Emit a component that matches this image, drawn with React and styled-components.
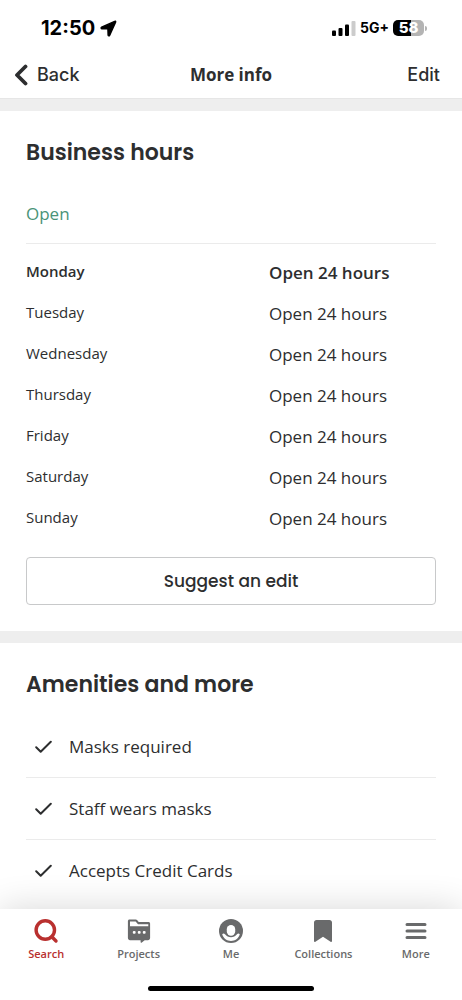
import React from "react";
import styled, { createGlobalStyle } from "styled-components";

const ink = "#2d2e2f";
const red = "#b9302f";
const gray = "#696a6b";
const body = '"Open Sans", "Noto Sans", sans-serif';
const display = 'Poppins, Inter, "Liberation Sans", sans-serif';
const system = 'Inter, "Liberation Sans", sans-serif';

const GlobalStyle = createGlobalStyle`
  *, *::before, *::after { box-sizing: border-box; }
  body { margin: 0; background: #fff; color: ${ink}; font-family: ${body}; }
  h1, h2, ul, dl, dd, p { margin: 0; padding: 0; }
  button { font: inherit; color: inherit; background: none; border: 0; padding: 0; cursor: pointer; }
  a { color: inherit; text-decoration: none; }
  svg { display: block; flex: none; }
`;

const Screen = styled.div`
  display: flex;
  flex-direction: column;
  height: 100vh;
  background: #fff;
`;

const StatusBar = styled.div`
  display: flex;
  align-items: center;
  justify-content: space-between;
  height: 54px;
  padding: 2px 35px 0 41px;
  color: #000;
  font-family: ${system};
`;

const Clock = styled.div`
  display: flex;
  align-items: center;
  gap: 5px;
  font-size: 20px;
  line-height: 24px;
  font-weight: 700;
`;

const Signals = styled.div`
  display: flex;
  align-items: center;
  gap: 4px;
  font-size: 14px;
  line-height: 20px;
  font-weight: 700;
`;

const Battery = styled.div`
  display: flex;
  align-items: center;
  gap: 1px;
`;

const BatteryLevel = styled.div`
  width: 31px;
  height: 16px;
  border-radius: 5px;
  background: linear-gradient(to right, #000 58%, #b4b4b4 58%);
  color: #fff;
  font-size: 15px;
  line-height: 16px;
  font-weight: 800;
  text-align: center;
`;

const BatteryTip = styled.div`
  width: 2px;
  height: 5px;
  border-radius: 0 2px 2px 0;
  background: #b4b4b4;
`;

const NavBar = styled.header`
  display: grid;
  grid-template-columns: 1fr auto 1fr;
  align-items: center;
  height: 45px;
  padding: 0 22px 2px 14px;
  border-bottom: 1px solid #e6e6e6;
`;

const BackButton = styled.button`
  justify-self: start;
  display: flex;
  align-items: center;
  gap: 9px;
  font-family: ${system};
  font-size: 18px;
  line-height: 24px;
  font-weight: 500;
`;

const PageTitle = styled.h1`
  font-size: 17px;
  line-height: 24px;
  font-weight: 700;
  padding-left: 8px;
`;

const EditButton = styled.button`
  justify-self: end;
  font-family: ${system};
  font-size: 18px;
  line-height: 24px;
  font-weight: 500;
`;

const Content = styled.main`
  flex: 1;
  min-height: 0;
  overflow-y: auto;
  scrollbar-width: none;
`;

const Band = styled.div`
  height: 12px;
  background: #eee;
`;

const Section = styled.section`
  padding: 26px;
`;

const SectionTitle = styled.h2`
  font-family: ${display};
  font-size: 22px;
  line-height: 32px;
  font-weight: 600;
`;

const OpenStatus = styled.p`
  padding: 33px 0 17px;
  border-bottom: 1px solid #ebebeb;
  color: #4a9378;
  font-size: 17px;
  line-height: 24px;
`;

const HoursList = styled.dl`
  padding: 8px 0 18px;
`;

const HoursRow = styled.div`
  display: grid;
  grid-template-columns: 243fr 167fr;
  align-items: start;
  height: 41px;
  padding-top: 9px;
  font-weight: ${(p) => (p.$today ? 600 : 400)};
`;

const Day = styled.dt`
  font-size: 15px;
  line-height: 20px;
`;

const Hours = styled.dd`
  font-size: 17px;
  line-height: 24px;
`;

const SuggestButton = styled.button`
  display: block;
  width: 100%;
  height: 48px;
  border: 1px solid #c8c9ca;
  border-radius: 4px;
  font-family: ${display};
  font-size: 17px;
  line-height: 24px;
  font-weight: 500;
`;

const AmenityList = styled.ul`
  list-style: none;
  padding-top: 15px;
`;

const Amenity = styled.li`
  display: flex;
  align-items: center;
  gap: 17px;
  height: 62px;
  padding-left: 9px;
  border-bottom: 1px solid #ebebeb;
  font-size: 17px;
  line-height: 24px;

  &:last-child {
    border-bottom: 0;
  }
`;

const TabBar = styled.nav`
  position: relative;
  background: #fff;
  box-shadow: 0 0 36px rgba(0, 0, 0, 0.16);
`;

const Tabs = styled.div`
  display: flex;
  padding: 9px 0 24px;
`;

const Tab = styled.a`
  flex: 1;
  display: flex;
  flex-direction: column;
  align-items: center;
  gap: 2px;
  color: ${(p) => (p.$active ? red : gray)};
  font-size: 11px;
  line-height: 16px;
  font-weight: 600;
`;

const HomeIndicator = styled.div`
  width: 36%;
  height: 5px;
  margin: 0 auto 9px;
  border-radius: 3px;
  background: #000;
`;

const LocationArrow = () => (
  <svg width="17" height="17" viewBox="0 0 17 17" aria-hidden="true">
    <path d="M15.2 1.2 1.6 7.2c-.8.4-.6 1.5.3 1.5l6 .2.2 6.2c0 .9 1.100 1.100 1.500.3l6-13.300c.2-.6-.1-1.100-.4-.9Z" fill="#000" stroke="#000" strokeWidth="1.400" strokeLinejoin="round" />
  </svg>
);

const CellBars = () => (
  <svg width="24" height="15" viewBox="0 0 24 15" aria-hidden="true">
    <rect x="0" y="9.500" width="4" height="5.500" rx="1" />
    <rect x="6.500" y="7" width="4" height="8" rx="1" />
    <rect x="13" y="3.500" width="4" height="11.500" rx="1" />
    <rect x="19.500" y="0" width="4" height="15" rx="1" fill="#ccc" />
  </svg>
);

const BackChevron = () => (
  <svg width="14" height="22" viewBox="0 0 14 22" fill="none" aria-hidden="true">
    <path d="M11.500 2.500 3 11l8.500 8.500" stroke={ink} strokeWidth="3.800" strokeLinecap="round" strokeLinejoin="round" />
  </svg>
);

const Check = () => (
  <svg width="17" height="14" viewBox="0 0 17 14" fill="none" aria-hidden="true">
    <path d="m1.200 7.300 4.500 4.500L15.800 1.700" stroke={ink} strokeWidth="2" strokeLinecap="round" strokeLinejoin="round" />
  </svg>
);

const SearchIcon = () => (
  <svg width="26" height="26" viewBox="0 0 26 26" fill="none" aria-hidden="true">
    <circle cx="12.300" cy="12" r="9.200" stroke="currentColor" strokeWidth="3.400" />
    <path d="m18.800 18.800 4.200 4.200" stroke="currentColor" strokeWidth="3.400" strokeLinecap="round" />
  </svg>
);

const ProjectsIcon = () => (
  <svg width="26" height="26" viewBox="0 0 26 26" aria-hidden="true">
    <path fillRule="evenodd" d="M3.500 1.500h6.300c.6 0 1.100.3 1.500.8l1.400 1.700h9.800c.9 0 1.600.7 1.600 1.600v14.500c0 1.200-.9 2.100-2.100 2.100h-3.300l-3.200 2.500c-.4.300-.9 0-.9-.4v-2.100H4c-1.200 0-2.100-.9-2.100-2.100v-17c0-.9.700-1.600 1.600-1.600Zm.5 2v4.800h18.300V6.200H12L9.600 3.500Z" fill="currentColor" />
    <rect x="6.800" y="13" width="2.800" height="2.800" rx="1" fill="#fff" />
    <rect x="11.800" y="13" width="2.800" height="2.800" rx="1" fill="#fff" />
    <rect x="16.800" y="13" width="2.800" height="2.800" rx="1" fill="#fff" />
  </svg>
);

const MeIcon = () => (
  <svg width="26" height="26" viewBox="0 0 26 26" aria-hidden="true">
    <circle cx="13" cy="13" r="12" fill="currentColor" />
    <rect x="8.800" y="7" width="8.400" height="10.800" rx="4.200" fill="#fff" />
    <path d="M4.200 16.200c.8-.8 1.900-.9 2.800 0 1.600 2 3.600 3 6 3s4.400-1 6-3c.9-.9 2-.8 2.800 0-1.200 4.200-4.700 6.700-8.800 6.700s-7.600-2.500-8.800-6.700Z" fill="#fff" />
  </svg>
);

const CollectionsIcon = () => (
  <svg width="26" height="26" viewBox="0 0 26 26" aria-hidden="true">
    <path d="M6.500 2h13C20.900 2 22 3.100 22 4.500v18.600c0 .8-.8 1.200-1.400.7L13 18.700l-7.600 5.100c-.6.5-1.400.1-1.400-.7V4.500C4 3.100 5.100 2 6.500 2Z" fill="currentColor" />
  </svg>
);

const MoreIcon = () => (
  <svg width="26" height="26" viewBox="0 0 26 26" fill="none" aria-hidden="true">
    <path d="M4 6.500h18M4 13h18M4 19.500h18" stroke="currentColor" strokeWidth="3" strokeLinecap="round" />
  </svg>
);

const days = ["Monday", "Tuesday", "Wednesday", "Thursday", "Friday", "Saturday", "Sunday"];
const amenities = ["Masks required", "Staff wears masks", "Accepts Credit Cards"];
const tabs = [
  ["Search", SearchIcon],
  ["Projects", ProjectsIcon],
  ["Me", MeIcon],
  ["Collections", CollectionsIcon],
  ["More", MoreIcon],
];

export default function App() {
  return (
    <Screen>
      <GlobalStyle />
      <StatusBar>
        <Clock>
          12:50
          <LocationArrow />
        </Clock>
        <Signals>
          <CellBars />
          5G+
          <Battery>
            <BatteryLevel>58</BatteryLevel>
            <BatteryTip />
          </Battery>
        </Signals>
      </StatusBar>
      <NavBar>
        <BackButton type="button">
          <BackChevron />
          Back
        </BackButton>
        <PageTitle>More info</PageTitle>
        <EditButton type="button">Edit</EditButton>
      </NavBar>
      <Content>
        <Band />
        <Section>
          <SectionTitle>Business hours</SectionTitle>
          <OpenStatus>Open</OpenStatus>
          <HoursList>
            {days.map((day, i) => (
              <HoursRow key={day} $today={i === 0}>
                <Day>{day}</Day>
                <Hours>Open 24 hours</Hours>
              </HoursRow>
            ))}
          </HoursList>
          <SuggestButton type="button">Suggest an edit</SuggestButton>
        </Section>
        <Band />
        <Section>
          <SectionTitle>Amenities and more</SectionTitle>
          <AmenityList>
            {amenities.map((name) => (
              <Amenity key={name}>
                <Check />
                {name}
              </Amenity>
            ))}
          </AmenityList>
        </Section>
      </Content>
      <TabBar>
        <Tabs>
          {tabs.map(([label, Icon], i) => (
            <Tab key={label} href={`#${label.toLowerCase()}`} $active={i === 0}>
              <Icon />
              {label}
            </Tab>
          ))}
        </Tabs>
        <HomeIndicator />
      </TabBar>
    </Screen>
  );
}
